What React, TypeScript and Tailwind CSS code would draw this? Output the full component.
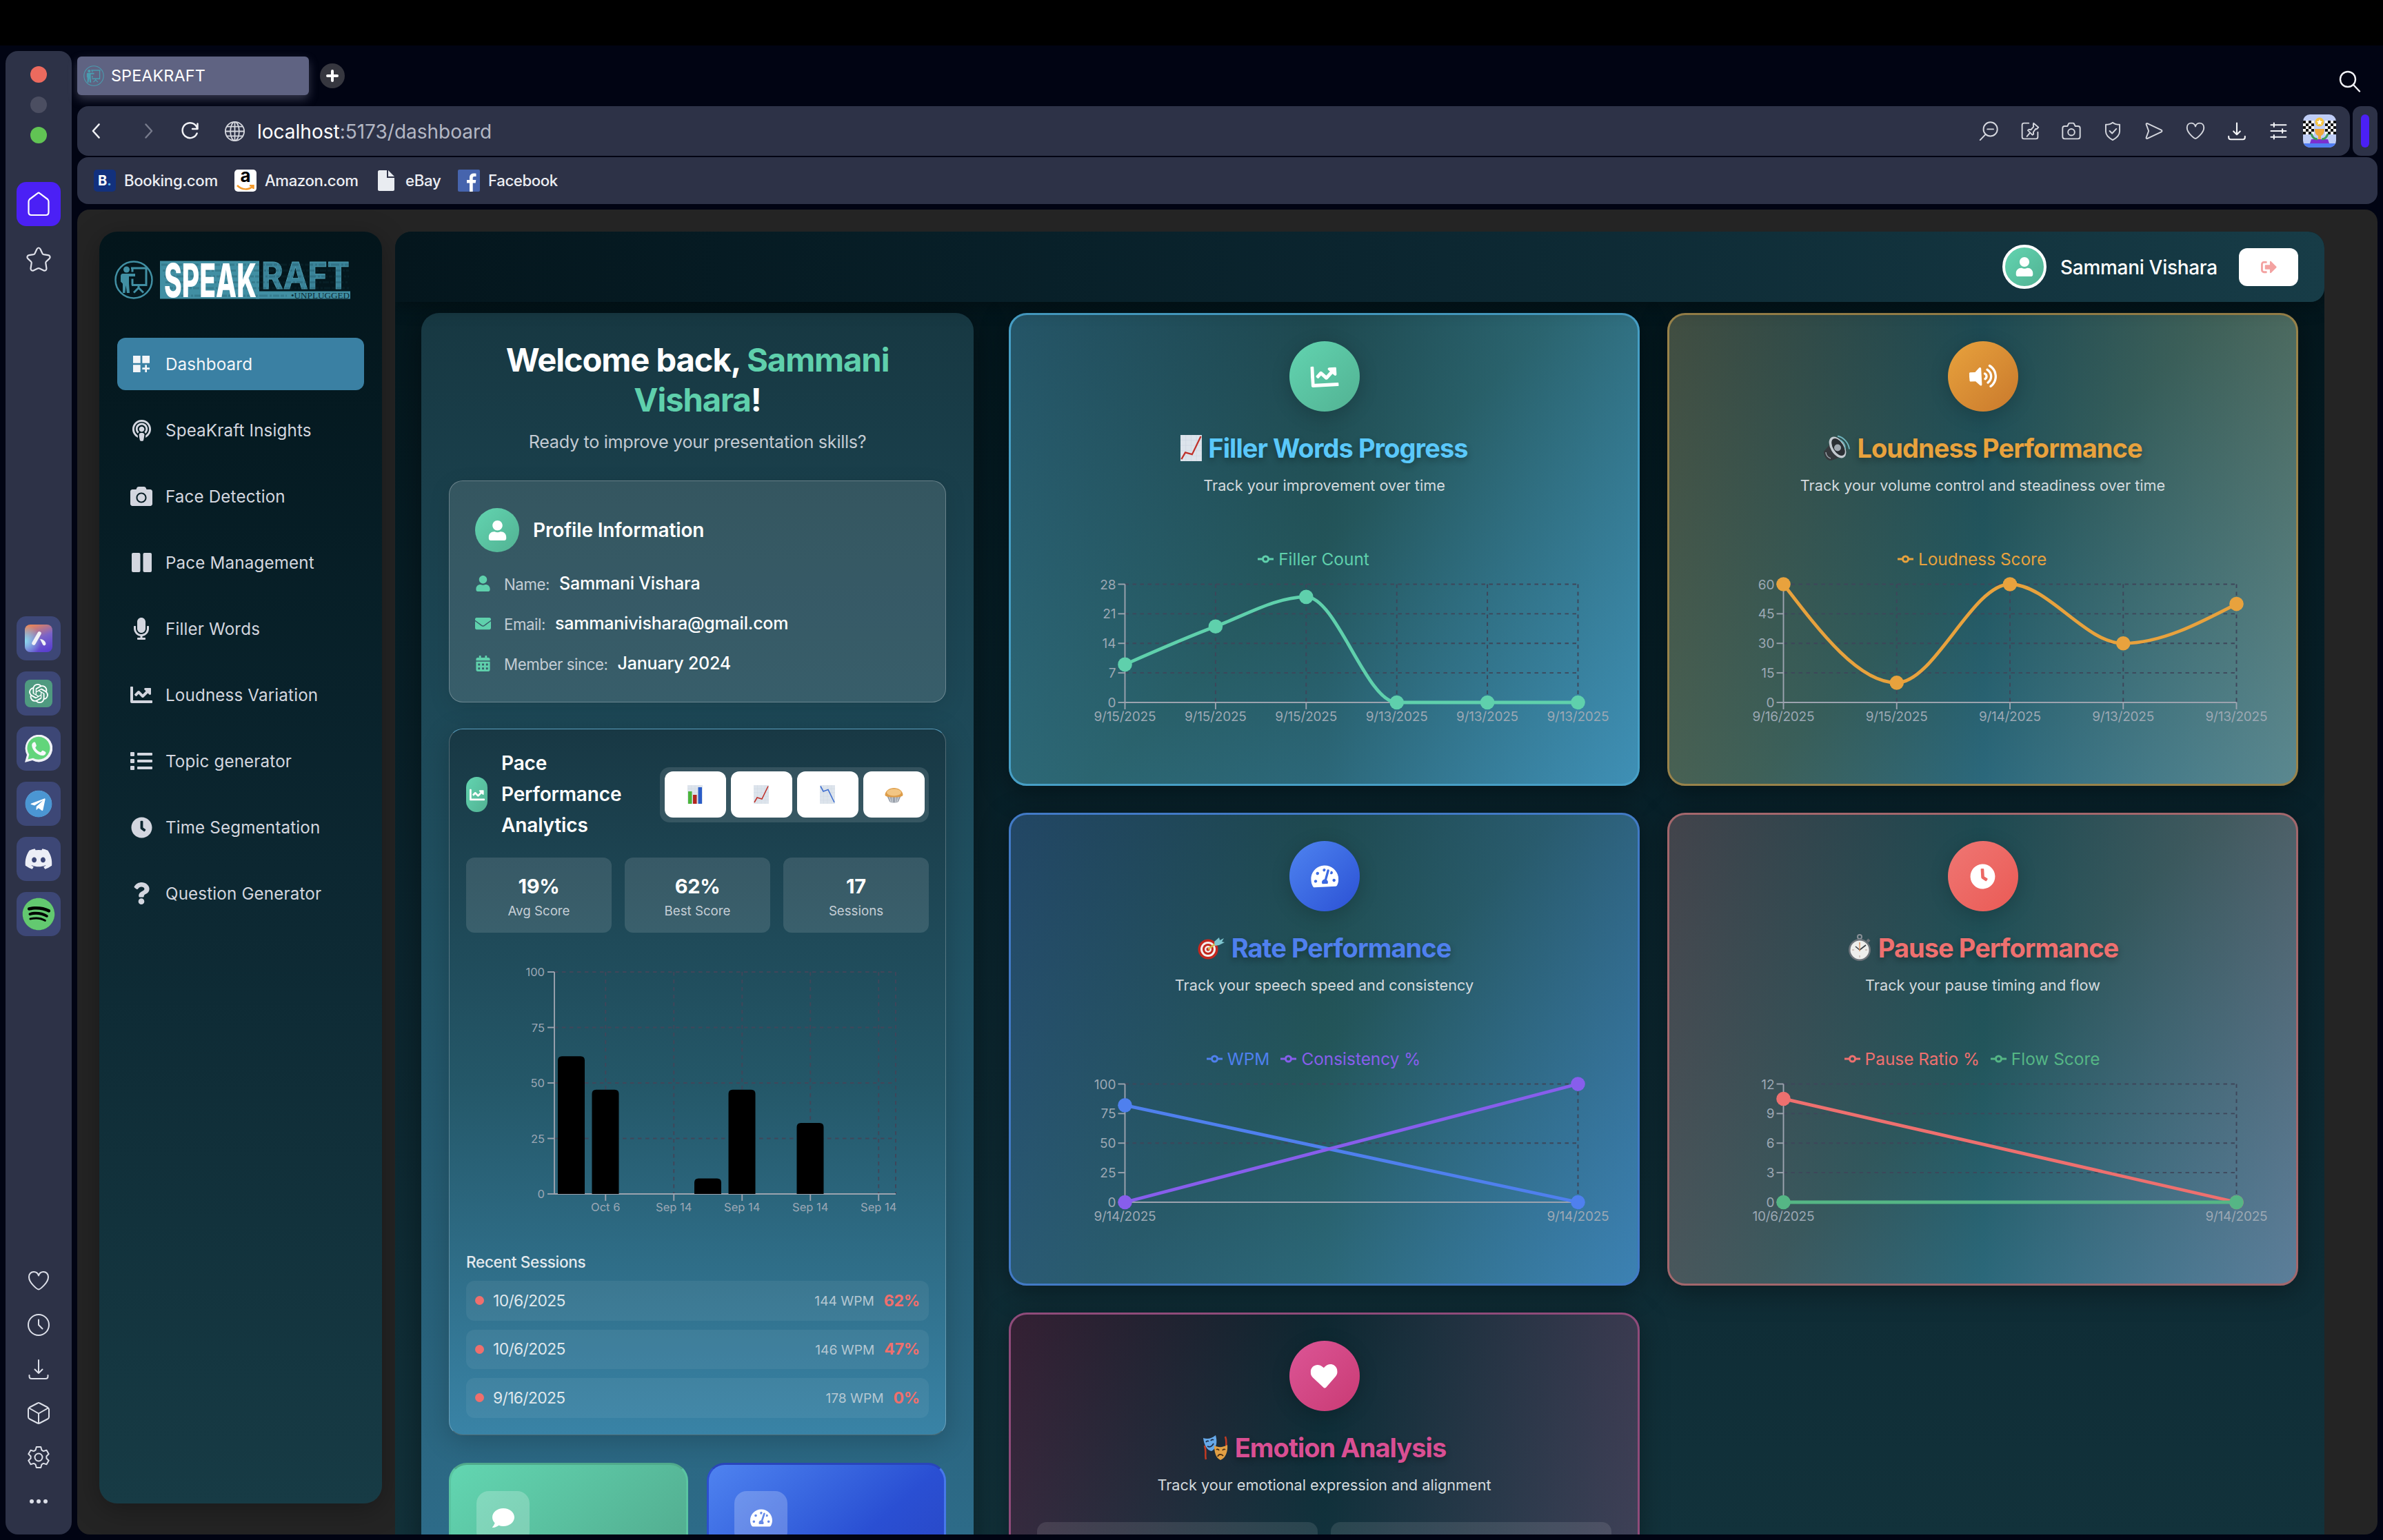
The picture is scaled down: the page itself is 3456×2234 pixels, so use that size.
import React from "react";
import {
  FaCalendarAlt,
  FaCamera,
  FaChartLine,
  FaClock,
  FaComment,
  FaDiscord,
  FaEnvelope,
  FaHeart,
  FaList,
  FaMicrophone,
  FaPodcast,
  FaQuestion,
  FaSignOutAlt,
  FaSpotify,
  FaTachometerAlt,
  FaTelegram,
  FaUser,
  FaVolumeUp,
  FaWhatsapp,
} from "react-icons/fa";
import { MdDashboardCustomize } from "react-icons/md";
import { SiOpenai } from "react-icons/si";

type Pt = [number, number];

/* ---------- curve helper: monotone cubic through the points ---------- */
function monotonePath(p: Pt[]): string {
  const n = p.length;
  if (n === 2) return `M${p[0][0]},${p[0][1]}L${p[1][0]},${p[1][1]}`;
  const h: number[] = [];
  const s: number[] = [];
  for (let i = 0; i < n - 1; i++) {
    h.push(p[i + 1][0] - p[i][0]);
    s.push((p[i + 1][1] - p[i][1]) / h[i]);
  }
  const t: number[] = new Array(n).fill(0);
  for (let i = 1; i < n - 1; i++) {
    const a = s[i - 1];
    const b = s[i];
    const q = (a * h[i] + b * h[i - 1]) / (h[i - 1] + h[i]);
    t[i] = (Math.sign(a) + Math.sign(b)) * Math.min(Math.abs(a), Math.abs(b), 0.5 * Math.abs(q));
  }
  t[0] = (3 * s[0] - t[1]) / 2;
  t[n - 1] = (3 * s[n - 2] - t[n - 2]) / 2;
  let d = `M${p[0][0]},${p[0][1]}`;
  for (let i = 0; i < n - 1; i++) {
    const k = h[i] / 3;
    d += `C${p[i][0] + k},${p[i][1] + k * t[i]},${p[i + 1][0] - k},${p[i + 1][1] - k * t[i + 1]},${p[i + 1][0]},${p[i + 1][1]}`;
  }
  return d;
}

/* ---------- thin line icons of the browser chrome ---------- */
function Line({ size = 32, color = "#e3e5ee", w = 2, children }: { size?: number; color?: string; w?: number; children: React.ReactNode }) {
  return (
    <svg width={size} height={size} viewBox="0 0 32 32" fill="none" stroke={color} strokeWidth={w} strokeLinecap="round" strokeLinejoin="round">
      {children}
    </svg>
  );
}
const heartPath = "M16 28.5C14 28.5 2 19 2 10.5 2 6 5 3 9 3c3.500 0 6 2 7 5.500C17 5 19.500 3 23 3c4 0 7 3 7 7.500C30 19 18 28.500 16 28.500Z";
const downloadShape = (
  <>
    <path d="M16 3v19M10.500 16.500 16 22l5.500-5.500M2.500 25v1.500c0 2 1.500 3.500 3.500 3.500h20c2 0 3.500-1.500 3.500-3.500V25" />
  </>
);

function PresenterMark({ size, color }: { size: number; color: string }) {
  return (
    <svg width={size} height={size} viewBox="0 0 56 56" fill="none" stroke={color} strokeWidth="2">
      <circle cx="28" cy="28" r="26.500" />
      <circle cx="15.500" cy="15" r="4" fill={color} stroke="none" />
      <path d="M9 23c0-2 1-3 3-3h17v4H20v9l1 13h-4l-1.500-11L14 46h-3.500V33L9 31Z" fill={color} stroke="none" />
      <path d="M21 13h25M24 13v5M44 13v23H23M24 28v5" strokeWidth="2.500" />
      <path d="M33 36v4M27 45l6-6 6 6" strokeWidth="2.500" />
    </svg>
  );
}

/* ---------- outer browser sidebar ---------- */
function AppTile({ children }: { children: React.ReactNode }) {
  return <div className="flex size-16 items-center justify-center rounded-[14px] bg-[#3d4776]">{children}</div>;
}

function BrowserRail() {
  return (
    <aside className="ml-2 mt-2 flex h-[2152px] w-24 flex-col items-center rounded-[18px] bg-[#2d3247]">
      <div className="mt-[22px] flex flex-col gap-5">
        <span className="size-6 rounded-full bg-[#ec6a5e]" />
        <span className="size-6 rounded-full bg-[#4b4e61]" />
        <span className="size-6 rounded-full bg-[#61c454]" />
      </div>
      <div className="mt-14 flex size-16 items-center justify-center rounded-[14px] bg-[#4b20f5]">
        <svg width="32" height="36" viewBox="0 0 32 36" fill="none" stroke="#fff" strokeWidth="2.200" strokeLinejoin="round">
          <path d="M1.500 14.500c0-1.500.5-2.500 1.500-3.500L14.500 2.300c1-.8 2-.8 3 0L29 11c1 1 1.500 2 1.500 3.500V30c0 2.500-1.500 4-4 4h-21c-2.500 0-4-1.500-4-4Z" />
        </svg>
      </div>
      <div className="mt-[30px]">
        <svg width="36" height="36" viewBox="0 0 36 36" fill="none" stroke="#dfe1ea" strokeWidth="2.200" strokeLinejoin="round">
          <path d="M18 1.500c1.200 0 2 .8 2.600 2l2.900 6.200c.4.800 1 1.200 1.800 1.400l6.500 1c2.700.4 3.600 3 1.800 5L29 21.500c-.6.600-.8 1.400-.7 2.200l1.100 7.300c.4 2.800-1.800 4.400-4.300 3.200l-5.600-2.800c-1-.5-2-.5-3 0l-5.600 2.800c-2.500 1.200-4.700-.4-4.300-3.200l1.100-7.300c.1-.8-.1-1.600-.7-2.200l-4.600-4.400c-1.800-2-.9-4.600 1.800-5l6.500-1c.8-.2 1.400-.6 1.800-1.400l2.900-6.200c.6-1.200 1.400-2 2.600-2Z" />
        </svg>
      </div>
      <div className="mt-[500px] flex flex-col gap-4">
        <AppTile>
          <svg width="40" height="40" viewBox="0 0 40 40">
            <defs>
              <linearGradient id="aria1" x1="0.300" y1="0" x2="0.700" y2="1">
                <stop offset="0" stopColor="#e8845a" />
                <stop offset="0.500" stopColor="#7a63c8" />
                <stop offset="1" stopColor="#5a3fd0" />
              </linearGradient>
              <radialGradient id="aria2" cx="0" cy="0.600" r="0.600">
                <stop offset="0" stopColor="#8adcf0" />
                <stop offset="1" stopColor="#8adcf0" stopOpacity="0" />
              </radialGradient>
            </defs>
            <rect width="40" height="40" rx="8" fill="url(#aria1)" />
            <rect width="40" height="40" rx="8" fill="url(#aria2)" />
            <path d="M13 27 21 13" stroke="#f0f1f6" strokeWidth="5.500" strokeLinecap="round" />
            <path d="M22 21c4 0 8 3 8.500 7-.5 3-3.500 3-4.500 1Z" fill="#f0f1f6" />
          </svg>
        </AppTile>
        <AppTile>
          <div className="flex size-10 items-center justify-center rounded-lg bg-[#4f9a80]">
            <SiOpenai size={28} color="#fff" />
          </div>
        </AppTile>
        <AppTile>
          <svg width="40" height="40" viewBox="0 0 40 40">
            <path d="M0 40 3 29A19.800 19.800 0 1 1 11 37Z" fill="#f0f2f7" />
            <path d="M4.500 35.500 6.300 28.500A16.500 16.500 0 1 1 12 33.700Z" fill="#62d57b" />
            <path d="M14.500 10.500c-1.500-.3-4.500 1.500-4.300 5 .6 7 8.500 14.500 15.500 14.500 3 0 5-2 4.800-4.500-.1-.8-4-2.900-5-2.700-.9.200-1.800 2.600-2.700 2.500-3-.8-6.300-4-7.500-6.500-.2-.8 1.700-2 1.600-3-.1-1-1.500-5-2.400-5.300Z" fill="#f6f8fa" />
          </svg>
        </AppTile>
        <AppTile>
          <div className="flex size-[38px] items-center justify-center rounded-full bg-white">
            <FaTelegram className="size-10 shrink-0" color="#4b96d3" />
          </div>
        </AppTile>
        <AppTile>
          <FaDiscord size={42} color="#eceef6" />
        </AppTile>
        <AppTile>
          <div className="flex size-[46px] items-center justify-center rounded-full bg-black">
            <FaSpotify className="size-12 shrink-0" color="#63c970" />
          </div>
        </AppTile>
      </div>
      <div className="mt-[484px] flex flex-col gap-8">
        <Line color="#dcdfe8">
          <path d={heartPath} />
        </Line>
        <Line color="#dcdfe8">
          <circle cx="16" cy="16" r="15" />
          <path d="M16 8.500V16l5.500 5.500" />
        </Line>
        <Line color="#dcdfe8">{downloadShape}</Line>
        <Line color="#dcdfe8">
          <path d="M14.500 1.500c1-.6 2-.6 3 0L29 7.500c1.200.7 2 1.500 2 3v11c0 1.500-.8 2.300-2 3l-11.500 6c-1 .6-2 .6-3 0L3 24.500c-1.200-.7-2-1.500-2-3v-11c0-1.500.8-2.300 2-3ZM2 8.500l14 8 14-8M16 16.500V31" />
        </Line>
        <Line color="#dcdfe8">
          <circle cx="16" cy="16" r="5.500" />
          <path d="M12.800 1h6.400l1.300 4.700 2.500 1.400 4.500-1.300 3.200 5.500L27.400 14.500v3l3.300 3.200-3.200 5.500-4.500-1.300-2.500 1.400-1.300 4.700h-6.400l-1.300-4.700L9 24.900l-4.500 1.300-3.200-5.500 3.300-3.200v-3L1.300 11.300l3.200-5.500L9 7.100l2.500-1.400Z" />
        </Line>
        <Line color="#dcdfe8">
          <g fill="#dcdfe8" stroke="none">
            <circle cx="6" cy="16" r="3" />
            <circle cx="16" cy="16" r="3" />
            <circle cx="26" cy="16" r="3" />
          </g>
        </Line>
      </div>
    </aside>
  );
}

/* ---------- browser toolbar ---------- */
function TabStrip() {
  return (
    <div className="flex h-[88px] items-start">
      <div className="mt-4 flex h-14 w-[336px] items-center gap-[10px] rounded-md bg-[#5f6382] pl-[9px] shadow-[0_6px_14px_rgba(150,150,180,0.35)]">
        <PresenterMark size={30} color="#4a9db0" />
        <span className="text-[23.4px] tracking-[0.1px] text-white">SPEAKRAFT</span>
      </div>
      <div className="ml-4 mt-[26px] flex size-9 items-center justify-center rounded-full bg-[#36373f]">
        <svg width="18" height="18" viewBox="0 0 18 18" stroke="#fff" strokeWidth="4" strokeLinecap="round">
          <path d="M9 2v14M2 9h14" />
        </svg>
      </div>
      <div className="ml-auto mr-[24px] mt-[36px]">
        <Line size={32} w={2.4} color="#f1f2f6">
          <circle cx="13" cy="13" r="11" />
          <path d="m21 21 9 9.500" />
        </Line>
      </div>
    </div>
  );
}

function AddressBar() {
  const c = "#d5d7de";
  return (
    <div className="flex h-[72px] gap-1">
      <div className="flex flex-1 items-center rounded-[16px] bg-[#2d3247] pl-[15px] pr-5">
        <Line size={28} w={2.8} color="#f1f2f6">
          <path d="M19 5 9 16l10 11" />
        </Line>
        <span className="ml-[45px]">
          <Line size={28} w={2.6} color="#777b8c">
            <path d="m13 5 10 11-10 11" />
          </Line>
        </span>
        <span className="ml-[34px]">
          <Line size={28} w={2.8} color="#f1f2f6">
            <path d="M27 20a12.500 12.500 0 1 1 .5-8.500M28 4v8.500h-8.500" />
          </Line>
        </span>
        <span className="ml-[36px]">
          <Line size={29} w={2} color={c}>
            <circle cx="16" cy="16" r="15" />
            <ellipse cx="16" cy="16" rx="7" ry="15" />
            <path d="M16 1v30M1 16h30M3.500 8.500h25M3.500 23.500h25" />
          </Line>
        </span>
        <span className="ml-[18px] mt-0.5 text-[28px] text-white">
          localhost<span className="text-[#b3b7c4]">:5173/dashboard</span>
        </span>
        <div className="ml-auto flex items-center gap-8">
          <Line size={28} color={c} w={2.2}>
            <circle cx="19" cy="13" r="11.500" />
            <path d="m11 21.500-9 9.500M14 13h10" />
          </Line>
          <Line size={28} color={c} w={2.2}>
            <path d="M14 3H6C4 3 3 4 3 6v20c0 2 1 3 3 3h20c2 0 3-1 3-3v-8M22 3l8 7-3 3-1.500-.5-4 5.500.5 3-2 1.500L12.500 15l2-1.500 3 .5 4.500-5-.5-3ZM16 19l-5 6" />
          </Line>
          <Line size={28} color={c} w={2.2}>
            <path d="M5 8h4.500l2-4c.3-.7.800-1 1.500-1h6c.7 0 1.200.3 1.500 1l2 4H27c2 0 3.500 1.500 3.500 3.500v14c0 2-1.500 3.500-3.500 3.500H5c-2 0-3.500-1.500-3.500-3.500v-14C1.500 9.500 3 8 5 8Z" />
            <circle cx="16" cy="18" r="5.500" />
          </Line>
          <Line size={28} color={c} w={2.2}>
            <path d="M16 2c3 2.500 7 3.500 11.500 3.500v11C27.500 23 23 27 16 31 9 27 4.500 23 4.500 16.500v-11C9 5.500 13 4.500 16 2ZM11 16l4 4 7-7.500" />
          </Line>
          <Line size={28} color={c} w={2.2}>
            <path d="M5 3.500 28 14.500c1.500.8 1.500 2.200 0 3L5 28.500c-1.500.6-2.300-.4-2-1.500L7 16 3 5c-.3-1.100.5-2.100 2-1.500Z" />
          </Line>
          <Line size={28} color={c} w={2.2}>
            <path d={heartPath} />
          </Line>
          <Line size={28} color="#f4f5f8" w={2.4}>
            {downloadShape}
          </Line>
          <Line size={28} color="#f4f5f8" w={2.4}>
            <path d="M4 6h25M4 16h25M4 26h25M9 3v6M23 13v6M9 23v6" />
          </Line>
          <TrophyAvatar />
        </div>
      </div>
      <div className="flex w-9 items-center justify-center rounded-[12px] bg-[#2d3247]">
        <div className="h-12 w-3 rounded-full bg-[#4b20f5]" />
      </div>
    </div>
  );
}

function TrophyAvatar() {
  const squares: React.ReactNode[] = [];
  for (let r = 0; r < 5; r++)
    for (let c = 0; c < 4; c++)
      if ((r + c) % 2 === 0) {
        squares.push(<rect key={`l${r}${c}`} x={c * 4} y={9 + r * 4} width="4" height="4" fill="#111" />);
        squares.push(<rect key={`r${r}${c}`} x={44 - c * 4} y={9 + r * 4} width="4" height="4" fill="#111" />);
      }
  return (
    <div className="-ml-[10px] size-12 overflow-hidden rounded-[10px]">
      <svg width="48" height="48" viewBox="0 0 48 48">
        <rect width="48" height="48" fill="#bfcdf6" />
        <rect x="0" y="9" width="16" height="20" fill="#fff" />
        <rect x="32" y="9" width="16" height="20" fill="#fff" />
        {squares}
        <rect y="42" width="48" height="6" fill="#4f7cf0" />
        <path d="M10 42h28l-2-6H12Z" fill="#7b2fd0" />
        <path d="M12 28c2 7 6 8 9 8M36 28c-2 7-6 8-9 8" stroke="#3e9a5a" strokeWidth="3" fill="none" />
        <path d="M17 21h14c0 6-2 9-5 10v5h-4v-5c-3-1-5-4-5-10Z" fill="#f0a83c" />
        <circle cx="24" cy="11" r="6.500" fill="#f6c443" />
        <path d="m24 7 1.200 2.700 3 .3-2.200 2 .6 3-2.600-1.600-2.600 1.600.6-3-2.200-2 3-.3Z" fill="#fff" />
      </svg>
    </div>
  );
}

function Bookmarks() {
  return (
    <div className="mt-0.5 flex h-[68px] items-center rounded-[16px] bg-[#2d3247] pl-6 text-[22.2px] font-medium text-[#eceef3]">
      <span className="flex size-8 items-center justify-center rounded-[5px] bg-[#12317e] text-[20px] font-bold text-white">
        B<span className="text-[#5ab8f0]">.</span>
      </span>
      <span className="ml-3 w-[136px] whitespace-nowrap tracking-[-0.3px]">Booking.com</span>
      <span className="ml-[24px] flex size-8 flex-col items-center rounded-[5px] bg-white">
        <span className="h-[22px] text-[26px] font-bold leading-[18px] text-black">a</span>
        <svg width="26" height="8" viewBox="0 0 26 8" fill="none" stroke="#f59b2c" strokeWidth="2.500">
          <path d="M1 1c7 7 17 7 23 1M19 1.200h5.500V6" />
        </svg>
      </span>
      <span className="ml-3 w-[136px] whitespace-nowrap tracking-[-0.4px]">Amazon.com</span>
      <svg className="ml-[28px]" width="24" height="30" viewBox="0 0 24 30" fill="#e9ecf1">
        <path d="M2 0h11v11h11v17c0 1-1 2-2 2H2c-1 0-2-1-2-2V2c0-1 1-2 2-2Zm13 0 9 9h-9Z" />
      </svg>
      <span className="ml-4 w-[52px] tracking-[-0.3px]">eBay</span>
      <span className="ml-6 flex size-8 items-end justify-center overflow-hidden rounded-[2px] bg-[#4664ad]">
        <svg width="32" height="32" viewBox="0 0 32 32" fill="#fff">
          <path d="M17 32V19.500h-4V15h4v-3.500C17 7.500 19.500 5.500 23 5.500c1.700 0 3 .1 3.500.2v4.200h-2.500c-2 0-2.300 1-2.300 2.300V15h4.600l-.6 4.500h-4V32Z" />
        </svg>
      </span>
      <span className="ml-3 tracking-[-0.4px]">Facebook</span>
    </div>
  );
}

/* ---------- dashboard side navigation ---------- */
function Logo() {
  const rows = [8, 16.5, 25, 33.5, 42, 53];
  return (
    <svg className="ml-[22px]" width="360" height="60" viewBox="0 0 360 60">
      <g transform="translate(0,1.500)" fill="none" stroke="#418fa3" strokeWidth="2">
        <circle cx="28" cy="28.500" r="26.500" strokeWidth="2.500" />
        <circle cx="17.500" cy="13.500" r="4.500" fill="#418fa3" stroke="none" />
        <path d="M9 23c0-2 1-3.500 3-3.500h18v4H21v10l1 14h-4l-1.500-11-1 11H12V34l-3-3Z" fill="#418fa3" stroke="none" />
        <path d="M24 11.500h24M26 11v6M46 11v25H25M26 27v9" strokeWidth="3" />
        <path d="M35 36v5M28 47l7-7 7 7" strokeWidth="3" />
      </g>
      <rect x="66" y="2.500" width="144" height="55" fill="#418fa3" />
      <rect x="205" y="46.500" width="137" height="11" fill="#418fa3" />
      <text x="213" y="42.500" fontFamily="Inter, sans-serif" fontWeight="700" fontSize="54" textLength="128" lengthAdjust="spacingAndGlyphs" fill="#3a8399" stroke="#4d9aad" strokeWidth="1">
        RAFT
      </text>
      <g stroke="#123b48" strokeWidth="3" strokeDasharray="9 2 5 2 12 3 3 2" opacity="0.22">
        {rows.map((y, i) => (
          <path key={y} d={`M${68 + i * 2} ${y}H${i === 5 ? 250 : 340}`} />
        ))}
      </g>
      <text x="72" y="54.500" fontFamily="Inter, sans-serif" fontWeight="800" fontSize="67" textLength="134" lengthAdjust="spacingAndGlyphs" fill="#fff">
        SPEAK
      </text>
      <text x="256" y="57" fontFamily="Liberation Serif, serif" fontSize="12.500" textLength="85" lengthAdjust="spacingAndGlyphs" fill="#0b2a34">
        •UNPLUGGED
      </text>
    </svg>
  );
}

function ColumnsIcon() {
  return (
    <svg width="29" height="28" viewBox="0 0 29 28" fill="#d3d6df">
      <rect width="12.500" height="28" rx="2" />
      <rect x="16.500" width="12.500" height="28" rx="2" />
    </svg>
  );
}

function SideNav() {
  const items: { icon: React.ReactNode; label: string; active?: boolean }[] = [
    { icon: <MdDashboardCustomize size={32} />, label: "Dashboard", active: true },
    { icon: <FaPodcast size={31} />, label: "SpeaKraft Insights" },
    { icon: <FaCamera size={32} />, label: "Face Detection" },
    { icon: <ColumnsIcon />, label: "Pace Management" },
    { icon: <FaMicrophone size={32} />, label: "Filler Words" },
    { icon: <FaChartLine size={32} />, label: "Loudness Variation" },
    { icon: <FaList size={32} />, label: "Topic generator" },
    { icon: <FaClock size={31} />, label: "Time Segmentation" },
    { icon: <FaQuestion size={32} />, label: "Question Generator" },
  ];
  return (
    <nav className="mt-8 h-[1845px] w-[410px] shrink-0 rounded-[26px] bg-linear-to-b from-[#03151b] via-[#0c2731] to-[#173b45] shadow-[0_8px_40px_rgba(0,0,0,0.3)]">
      <div className="h-[154px] pt-[40px]">
        <Logo />
      </div>
      <div className="flex flex-col gap-5 px-[26px]">
        {items.map((it) => (
          <div
            key={it.label}
            className={
              it.active
                ? "flex h-[76px] items-center gap-[19px] rounded-[12px] bg-[#3a80a3] pl-[19px] text-[24.2px] text-[#f3f5f8]"
                : "flex h-[76px] items-center gap-[19px] rounded-[12px] pl-[19px] text-[24.2px] text-[#d3d6df]"
            }
          >
            <span className="flex w-8 justify-center">{it.icon}</span>
            <span className="whitespace-nowrap pt-0.5 tracking-[0.15px]">{it.label}</span>
          </div>
        ))}
      </div>
    </nav>
  );
}

/* ---------- small picture glyphs ---------- */
function SheetGlyph({ size, kind }: { size: number; kind: "up" | "down" | "bars" }) {
  return (
    <svg width={(size * 22) / 27} height={size} viewBox="0 0 22 27">
      <rect width="22" height="27" fill="#dde4ec" />
      <path d="M0 5.400h22M0 10.800h22M0 16.200h22M0 21.600h22M5.500 0v27M11 0v27M16.500 0v27" stroke="#cdd6e0" strokeWidth="0.400" />
      {kind === "up" && <path d="M1 25 5 18l7 2L21 1.500" stroke="#c0322b" strokeWidth="1.600" fill="none" />}
      {kind === "down" && <path d="M1 1.500 5 9l7-2.500L21 25" stroke="#3f6fd0" strokeWidth="1.600" fill="none" />}
      {kind === "bars" && (
        <>
          <rect x="1" y="9" width="5.500" height="18" fill="#4bb53a" />
          <rect x="8" y="14" width="5.500" height="13" fill="#b3261e" />
          <rect x="15.500" y="3" width="5.500" height="24" fill="#2a5cc7" />
        </>
      )}
    </svg>
  );
}
function PieGlyph() {
  return (
    <svg width="27" height="24" viewBox="0 0 27 24">
      <path d="M3 13h21l-4 9c-3.500 2-9.500 2-13 0Z" fill="#9aa1ab" />
      <path d="M7 15l2 7M11 15v8M16 15v8M20 15l-2 7" stroke="#dfe3e8" strokeWidth="1" />
      <path d="M0.500 12C1 6 7 2 13.500 2S26 6 26.500 12c0 2-3 3.500-13 3.500S.5 14 .5 12Z" fill="#dd9c48" />
      <ellipse cx="13.500" cy="8.500" rx="10.500" ry="5" fill="#f2c684" />
    </svg>
  );
}
function SpeakerGlyph() {
  return (
    <svg width="40" height="38" viewBox="0 0 40 38">
      <path d="M1 24 13 10l12 22-13 5c-6 1-11-6-11-13Z" fill="#35393d" />
      <path d="M4 25c0 4 3 8 7 9" stroke="#9aa1a8" strokeWidth="1.500" fill="none" />
      <ellipse cx="21" cy="18" rx="10" ry="17" transform="rotate(-32 21 18)" fill="#c3c9cf" />
      <ellipse cx="22" cy="17.500" rx="7.500" ry="14" transform="rotate(-32 22 17.500)" fill="#2b2f34" />
      <circle cx="21" cy="18.500" r="5" fill="#a0a8b0" />
      <path d="M24 7c5 2 8 7 8 13M21 1.500c9 2 16 10 17 19" fill="none" stroke="#6fb3bd" strokeWidth="1.800" />
    </svg>
  );
}
function DartGlyph() {
  return (
    <svg width="40" height="34" viewBox="0 0 40 34">
      <circle cx="15" cy="19" r="14.500" fill="#c4281f" />
      <circle cx="15" cy="19" r="11" fill="#f4f0ee" />
      <circle cx="15" cy="19" r="8" fill="#c4281f" />
      <circle cx="15" cy="19" r="5" fill="#f4f0ee" />
      <circle cx="15" cy="19" r="2.500" fill="#c4281f" />
      <path d="M15 19 27 10" stroke="#d7b84a" strokeWidth="2.500" />
      <path d="m24 8 7-6 1 4 6-3-3 5 4 1-8 4-6 1Z" fill="#7fc5cf" />
    </svg>
  );
}
function StopwatchGlyph() {
  return (
    <svg width="36" height="40" viewBox="0 0 36 40">
      <circle cx="18" cy="4" r="3" fill="none" stroke="#8a9097" strokeWidth="2" />
      <path d="m29 8 3 3" stroke="#6a7077" strokeWidth="4" />
      <circle cx="18" cy="23" r="16" fill="#6d747b" />
      <circle cx="18" cy="23" r="13.500" fill="#eeeeec" />
      <path d="M18 12v3M18 31v3M7 23h3M26 23h3" stroke="#c9b8b0" strokeWidth="1.500" />
      <path d="M18 23 12 18M18 23l9-7" stroke="#3a3f45" strokeWidth="1.600" />
      <path d="M18 25V12" stroke="#e0905a" strokeWidth="1.200" />
    </svg>
  );
}
function MasksGlyph() {
  return (
    <svg width="38" height="38" viewBox="0 0 38 38">
      <path d="M3 16c3 8 0 14 2 20M33 3c3 8 0 12 2 18" stroke="#c23a22" strokeWidth="2.500" fill="none" />
      <path d="M1 5c6 2 12 1 18-4 3 10 1 20-6 23C6 23 2 14 1 5Z" fill="#66a8e8" />
      <path d="M5 11c1-2 3-2 4-1M12 9c1-2 3-2 4-1M7 17c4 2 7 0 9-4" stroke="#1b2b44" strokeWidth="1.700" fill="none" />
      <path d="M17 16c6 3 12 3 19-1 1 10-3 20-10 22-7-3-9-12-9-21Z" fill="#e2a044" />
      <path d="M20 22c1-1 3-1 4 1M29 23c1-2 3-2 4-1M22 32c1-4 6-4 8-1" stroke="#4a2d12" strokeWidth="1.700" fill="none" />
    </svg>
  );
}

/* ---------- profile + pace column ---------- */
function ProfileCard() {
  const rows = [
    { icon: <FaUser size={23} />, k: "Name:", v: "Sammani Vishara" },
    { icon: <FaEnvelope size={23} />, k: "Email:", v: "sammanivishara@gmail.com" },
    { icon: <FaCalendarAlt size={23} />, k: "Member since:", v: "January 2024" },
  ];
  return (
    <section className="mt-[37px] h-[322px] rounded-[20px] border border-white/25 bg-white/12 px-[37px] pt-[39px] shadow-[0_8px_32px_rgba(0,0,0,0.1)]">
      <div className="flex items-center gap-5">
        <div className="flex size-16 items-center justify-center rounded-full bg-linear-to-br from-[#62d4b0] to-[#52b293]">
          <FaUser size={29} color="#fff" />
        </div>
        <h3 className="text-[28px] font-semibold tracking-[-0.15px] text-white">Profile Information</h3>
      </div>
      <div className="mt-4">
        {rows.map((r) => (
          <div key={r.k} className="flex h-[58px] items-center whitespace-nowrap">
            <span className="flex w-[23px] justify-center text-[#5fd0ac]">{r.icon}</span>
            <span className="ml-[19px] pt-1 text-[22.2px] tracking-[-0.4px] text-[#c3ccd4]">{r.k}</span>
            <span className="ml-[14px] pt-0.5 text-[25px] font-medium tracking-[-0.2px] text-white">{r.v}</span>
          </div>
        ))}
      </div>
    </section>
  );
}

const paceValues = [62, 47, 0, 0, 7, 47, 0, 32, 0, 0];

function PaceChart() {
  const x0 = 128;
  const step = 49.5;
  const top = 57;
  const bottom = 379;
  const right = x0 + step * 10;
  const ys = [100, 75, 50, 25, 0];
  const y = (v: number) => bottom - ((bottom - top) * v) / 100;
  const xl = ["Oct 6", "Sep 14", "Sep 14", "Sep 14", "Sep 14"];
  return (
    <svg width="670" height="457" viewBox="0 0 670 457" fontFamily="Inter, sans-serif" fontSize="16.500">
      <g stroke="#40465a" strokeWidth="1.900" strokeDasharray="5.500 5.500">
        {ys.map((v) => (
          <path key={v} d={`M${x0} ${y(v)}H${right}`} />
        ))}
        {xl.map((_, i) => (
          <path key={i} d={`M${x0 + step * (1.5 + 2 * i)} ${top}V${bottom}`} />
        ))}
        <path d={`M${right} ${top}V${bottom}`} />
      </g>
      <g stroke="#9ca3af" strokeWidth="1.900">
        <path d={`M${x0} ${top}V${bottom}H${right}`} fill="none" />
        {ys.map((v) => (
          <path key={v} d={`M${x0 - 10} ${y(v)}H${x0}`} />
        ))}
        {xl.map((_, i) => (
          <path key={i} d={`M${x0 + step * (1.5 + 2 * i)} ${bottom}v10`} />
        ))}
      </g>
      {paceValues.map((v, i) =>
        v ? <path key={i} d={`M${x0 + 5 + i * step} ${bottom}V${y(v) + 6}q0-6 6-6h27q6 0 6 6V${bottom}Z`} fill="#000" /> : null,
      )}
      <g fill="#9ca7b5">
        {ys.map((v) => (
          <text key={v} x={x0 - 14} y={y(v) + 6} textAnchor="end">
            {v}
          </text>
        ))}
        {xl.map((l, i) => (
          <text key={i} x={x0 + step * (1.5 + 2 * i)} y="403.500" textAnchor="middle">
            {l}
          </text>
        ))}
      </g>
    </svg>
  );
}

function PaceCard() {
  const stats = [
    ["19%", "Avg Score"],
    ["62%", "Best Score"],
    ["17", "Sessions"],
  ];
  const sessions = [
    ["10/6/2025", "144 WPM", "62%"],
    ["10/6/2025", "146 WPM", "47%"],
    ["9/16/2025", "178 WPM", "0%"],
  ];
  const glyphs = [<SheetGlyph key="b" size={27} kind="bars" />, <SheetGlyph key="u" size={27} kind="up" />, <SheetGlyph key="d" size={27} kind="down" />, <PieGlyph key="p" />];
  return (
    <section className="mt-[38px] h-[1025px] rounded-[20px] border border-b-[#4d6a72] border-t-[#5a9dbd] border-x-white/25 bg-linear-to-b from-[#183844] via-[#245768] to-[#3983a6] px-6 pt-[27px] shadow-[0_8px_40px_rgba(0,0,0,0.2)]">
      <div className="flex h-[135px] items-center">
        <div className="flex h-[51px] w-[31px] shrink-0 items-center justify-center overflow-hidden rounded-[16px] bg-linear-to-br from-[#62d4b0] to-[#52b293]">
          <FaChartLine size={22} color="#fff" />
        </div>
        <h3 className="ml-5 w-[190px] text-[28px] font-semibold leading-[45px] tracking-[-0.15px] text-white">Pace Performance Analytics</h3>
        <div className="ml-auto flex h-20 w-[390px] items-center justify-center gap-[7px] rounded-[14px] bg-white/12">
          {glyphs.map((g, i) => (
            <div key={i} className="flex h-[67px] w-[89px] items-center justify-center rounded-[12px] bg-white">
              {g}
            </div>
          ))}
        </div>
      </div>
      <div className="mt-6 grid h-[109px] grid-cols-3 gap-[19px]">
        {stats.map(([v, l]) => (
          <div key={l} className="flex flex-col items-center rounded-[12px] bg-white/12 pt-[23px]">
            <span className="text-[29px] font-bold leading-[38px] tracking-[-0.3px] text-white">{v}</span>
            <span className="mt-[3px] text-[18.7px] leading-[28px] text-[#c5ced6]">{l}</span>
          </div>
        ))}
      </div>
      <PaceChart />
      <h4 className="h-[41px] text-[22.5px] font-medium leading-[42px] tracking-[-0.3px] text-[#e3e9ee]">Recent Sessions</h4>
      <div className="mt-[7px] flex flex-col gap-[13px]">
        {sessions.map(([d, w, s]) => (
          <div key={w} className="flex h-[57.5px] items-center rounded-[12px] bg-white/6 px-[13px]">
            <span className="size-[13px] rounded-full bg-[#ef6f6d]" />
            <span className="ml-[13px] text-[22.8px] tracking-[-0.6px] text-[#dfe7ec]">{d}</span>
            <span className="ml-auto pt-0.5 text-[19.2px] text-[#b4c7d2]">{w}</span>
            <span className="ml-[14px] text-[23px] font-bold tracking-[-0.2px] text-[#ef6f6d]">{s}</span>
          </div>
        ))}
      </div>
    </section>
  );
}

function WelcomeColumn() {
  return (
    <div className="h-[1900px] w-[801px] shrink-0 rounded-[26px] bg-linear-to-b from-[#173842] via-[#215365] to-[#2f6f8e] px-10 pt-[39px] shadow-[0_8px_48px_rgba(0,0,0,0.4)]">
      <h2 className="text-center text-[47.2px] font-bold leading-[58px] tracking-[-1.1px] text-white">
        Welcome back, <span className="text-[#5fd0ac]">Sammani<br />Vishara</span>!
      </h2>
      <p className="mt-[11px] h-10 text-center text-[25.2px] leading-[42px] tracking-[-0.3px] text-[#c3cad2]">Ready to improve your presentation skills?</p>
      <ProfileCard />
      <PaceCard />
      <div className="mt-10 grid grid-cols-2 gap-[27px]">
        <div className="h-[300px] rounded-[26px] border-[3px] border-t-[#50a98b] border-x-[#5ac5a1] bg-linear-to-br from-[#62d6b1] to-[#4c9c82] pl-[37px] pt-[38px]">
          <div className="flex h-[77px] w-[77px] items-center justify-center rounded-[18px] bg-white/22">
            <FaComment size={32} color="#fff" />
          </div>
        </div>
        <div className="h-[300px] rounded-[26px] border-[3px] border-t-[#2945bb] border-l-[#2c50cf] border-r-[#4778ea] bg-linear-to-br from-[#4f83f0] via-[#2a4fd3] to-[#2841b8] pl-[37px] pt-[38px]">
          <div className="flex h-[77px] w-[77px] items-center justify-center rounded-[18px] bg-white/22">
            <FaTachometerAlt size={32} color="#fff" />
          </div>
        </div>
      </div>
    </div>
  );
}

/* ---------- line chart cards ---------- */
interface Series {
  name: string;
  color: string;
  values: number[];
}

function LegendMark({ color }: { color: string }) {
  return (
    <svg width="23" height="14" viewBox="0 0 23 14" fill="none" stroke={color} strokeWidth="3">
      <path d="M0 7h7M16 7h7" />
      <circle cx="11.500" cy="7" r="4" />
    </svg>
  );
}

function LineChart({ max, dates, series, sparse }: { max: number; dates: string[]; series: Series[]; sparse?: boolean }) {
  const x0 = 165.5;
  const x1 = 822.5;
  const top = 20.5;
  const bottom = 192;
  const x = (i: number) => x0 + ((x1 - x0) * i) / (dates.length - 1);
  const y = (v: number) => bottom - ((bottom - top) * v) / max;
  const ys = [1, 0.75, 0.5, 0.25, 0].map((k) => k * max);
  return (
    <svg width="909" height="240" viewBox="0 0 909 240" fontFamily="Inter, sans-serif" fontSize="19">
      <g stroke="#3e465a" strokeWidth="1.900" strokeDasharray="5.500 5.500">
        {ys.map((v, i) => (sparse && i % 2 ? null : <path key={v} d={`M${x0} ${y(v)}H${x1}`} />))}
        {dates.map((_, i) => (i ? <path key={i} d={`M${x(i)} ${top}V${bottom}`} /> : null))}
      </g>
      <g stroke="#9ca3af" strokeWidth="1.900" fill="none">
        <path d={`M${x0} ${top}V${bottom}H${x1}`} />
        {ys.map((v) => (
          <path key={v} d={`M${x0 - 10} ${y(v)}H${x0}`} />
        ))}
        {dates.map((_, i) => (
          <path key={i} d={`M${x(i)} ${bottom}v10`} />
        ))}
      </g>
      <g fill="#9ca8b4">
        {ys.map((v) => (
          <text key={v} x={x0 - 13} y={y(v) + 7} textAnchor="end">
            {v}
          </text>
        ))}
        {dates.map((d, i) => (
          <text key={i} x={x(i)} y="218.500" textAnchor="middle" textLength="90">
            {d}
          </text>
        ))}
      </g>
      {series.map((s) => {
        const pts = s.values.map((v, i): Pt => [x(i), y(v)]);
        return (
          <g key={s.name}>
            <path d={monotonePath(pts)} fill="none" stroke={s.color} strokeWidth="4.800" />
            {pts.map(([cx, cy], i) => (
              <circle key={i} cx={cx} cy={cy} r="10.300" fill={s.color} />
            ))}
          </g>
        );
      })}
    </svg>
  );
}

interface CardProps {
  frame: string;
  badge: string;
  icon: React.ReactNode;
  glyph: React.ReactNode;
  title: string;
  titleClass: string;
  subtitle: string;
  children?: React.ReactNode;
}

function MetricCard({ frame, badge, icon, glyph, title, titleClass, subtitle, children }: CardProps) {
  return (
    <section className={`flex h-[686px] flex-col items-center rounded-[26px] border-[3px] bg-origin-border pt-[38px] shadow-[0_8px_40px_rgba(0,0,0,0.35)] ${frame}`}>
      <div className={`flex size-[102px] shrink-0 items-center justify-center rounded-full shadow-[0_6px_28px_rgba(0,0,0,0.18)] ${badge}`}>
        <span className="-rotate-3">{icon}</span>
      </div>
      <h3 className={`mt-[29px] flex h-12 items-center gap-[9px] whitespace-nowrap text-[38px] font-bold tracking-[-0.95px] [text-shadow:0_4px_10px_rgba(0,0,0,0.3)] ${titleClass}`}>
        {glyph}
        <span>{title}</span>
      </h3>
      <p className="mt-4 h-7 text-[21.7px] leading-7 text-[#d3dade]">{subtitle}</p>
      {children}
    </section>
  );
}

function Legend({ series }: { series: Series[] }) {
  return (
    <div className="mt-[77px] flex h-8 items-center gap-4 pr-[31px] text-[24.4px]">
      {series.map((s) => (
        <span key={s.name} className="flex items-center gap-[7px] whitespace-nowrap" style={{ color: s.color }}>
          <LegendMark color={s.color} />
          {s.name}
        </span>
      ))}
    </div>
  );
}

const filler: Series[] = [{ name: "Filler Count", color: "#5fd0ac", values: [9, 18, 25, 0, 0, 0] }];
const loud: Series[] = [{ name: "Loudness Score", color: "#e8a23d", values: [60, 10, 60, 30, 50] }];
const rate: Series[] = [
  { name: "WPM", color: "#4f80ee", values: [82, 0] },
  { name: "Consistency %", color: "#875eec", values: [0, 100] },
];
const pause: Series[] = [
  { name: "Pause Ratio %", color: "#ee706f", values: [10.5, 0] },
  { name: "Flow Score", color: "#55b685", values: [0, 0] },
];

function CardGrid() {
  return (
    <div className="grid flex-1 grid-cols-2 content-start gap-x-[40px] gap-y-[39px]">
      <MetricCard
        frame="border-[#479fc6] bg-[linear-gradient(90deg,rgba(91,200,250,0.2),rgba(91,200,250,0)_50%,rgba(91,200,250,0.2)),linear-gradient(135deg,#173842,#235459_50%,#3882a5)]"
        badge="bg-linear-to-br from-[#62d4b0] to-[#52b293]"
        icon={<FaChartLine size={40} color="#fff" />}
        glyph={<SheetGlyph size={38} kind="up" />}
        title="Filler Words Progress"
        titleClass="text-[#5ac8fa]"
        subtitle="Track your improvement over time"
      >
        <Legend series={filler} />
        <LineChart max={28} dates={["9/15/2025", "9/15/2025", "9/15/2025", "9/13/2025", "9/13/2025", "9/13/2025"]} series={filler} />
      </MetricCard>
      <MetricCard
        frame="border-[#99834a] bg-[linear-gradient(90deg,rgba(232,162,60,0.2),rgba(232,162,60,0)_50%,rgba(232,162,60,0.2)),linear-gradient(135deg,#173842,#22555d_50%,#3882a5)]"
        badge="bg-linear-to-br from-[#e8a23d] to-[#c9792c]"
        icon={<FaVolumeUp size={40} color="#fff" />}
        glyph={<SpeakerGlyph />}
        title="Loudness Performance"
        titleClass="text-[#e8a23d]"
        subtitle="Track your volume control and steadiness over time"
      >
        <Legend series={loud} />
        <LineChart max={60} dates={["9/16/2025", "9/15/2025", "9/14/2025", "9/13/2025", "9/13/2025"]} series={loud} />
      </MetricCard>
      <MetricCard
        frame="border-[#427ac6] bg-[linear-gradient(90deg,rgba(78,128,238,0.2),rgba(78,128,238,0)_50%,rgba(78,128,238,0.2)),linear-gradient(135deg,#173842,#235559_50%,#3882a5)]"
        badge="bg-linear-to-br from-[#4f83f0] to-[#2c50d4]"
        icon={<FaTachometerAlt size={40} color="#fff" />}
        glyph={<DartGlyph />}
        title="Rate Performance"
        titleClass="text-[#4f80ee]"
        subtitle="Track your speech speed and consistency"
      >
        <Legend series={rate} />
        <LineChart sparse max={100} dates={["9/14/2025", "9/14/2025"]} series={rate} />
      </MetricCard>
      <MetricCard
        frame="border-[#a3676c] bg-[linear-gradient(90deg,rgba(238,112,110,0.2),rgba(238,112,110,0)_50%,rgba(238,112,110,0.2)),linear-gradient(135deg,#173842,#22555b_50%,#3882a5)]"
        badge="bg-linear-to-br from-[#ef7673] to-[#ea5a55]"
        icon={<FaClock size={37} color="#fff" />}
        glyph={<StopwatchGlyph />}
        title="Pause Performance"
        titleClass="text-[#ee706f]"
        subtitle="Track your pause timing and flow"
      >
        <Legend series={pause} />
        <LineChart max={12} dates={["10/6/2025", "9/14/2025"]} series={pause} />
      </MetricCard>
      <MetricCard
        frame="border-[#8f4b7a] bg-[linear-gradient(90deg,rgba(217,79,144,0.2),rgba(217,79,144,0)_50%,rgba(217,79,144,0.2)),linear-gradient(135deg,#0b141c,#0f2e38_40%,#1d4552)]"
        badge="bg-linear-to-br from-[#dc5596] to-[#c93a74]"
        icon={<FaHeart size={39} color="#fff" />}
        glyph={<MasksGlyph />}
        title="Emotion Analysis"
        titleClass="text-[#d94f93]"
        subtitle="Track your emotional expression and alignment"
      >
        <div className="mt-[40px] grid h-[200px] w-full shrink-0 grid-cols-2 gap-[19px] px-[38px]">
          <div className="rounded-[14px] bg-white/10" />
          <div className="rounded-[14px] bg-white/10" />
        </div>
      </MetricCard>
    </div>
  );
}

function MainPanel() {
  return (
    <main className="ml-[19px] mt-8 h-[1890px] w-[2798px] shrink-0 overflow-hidden rounded-t-[24px] bg-linear-to-b from-[#03151b] via-[#0a232c] to-[#12323b]">
      <header className="relative flex h-[102px] items-center rounded-r-[20px] bg-linear-to-r from-[#04161d] via-[#0b252f] to-[#173c47] pr-[38px] shadow-[0_4px_28px_rgba(0,0,0,0.35)]">
        <div className="ml-auto flex size-16 items-center justify-center rounded-full border-4 border-white bg-linear-to-br from-[#62d4b0] to-[#52b293]">
          <FaUser size={28} color="#fff" />
        </div>
        <span className="ml-5 w-[226px] whitespace-nowrap pt-0.5 text-[28px] font-medium tracking-[-0.3px] text-white">Sammani Vishara</span>
        <div className="ml-[33px] flex h-[55px] w-[86px] items-center justify-center rounded-[12px] bg-white">
          <FaSignOutAlt size={23} color="#f3a2a1" />
        </div>
      </header>
      <div className="flex items-start gap-[51px] pl-[38px] pr-[38px] pt-4">
        <WelcomeColumn />
        <CardGrid />
      </div>
    </main>
  );
}

export default function App() {
  return (
    <div className="flex h-[2234px] w-[3456px] overflow-hidden bg-[#010413] font-['Inter',sans-serif]">
      <div className="flex w-full flex-col">
        <div className="h-[66px] shrink-0 bg-black" />
        <div className="flex flex-1">
          <BrowserRail />
          <div className="ml-2 flex w-[3336px] flex-col">
            <TabStrip />
            <AddressBar />
            <Bookmarks />
            <div className="mt-2 flex h-[1922px] overflow-hidden rounded-[18px] bg-[#242424] pl-8">
              <SideNav />
              <MainPanel />
            </div>
          </div>
        </div>
      </div>
    </div>
  );
}
